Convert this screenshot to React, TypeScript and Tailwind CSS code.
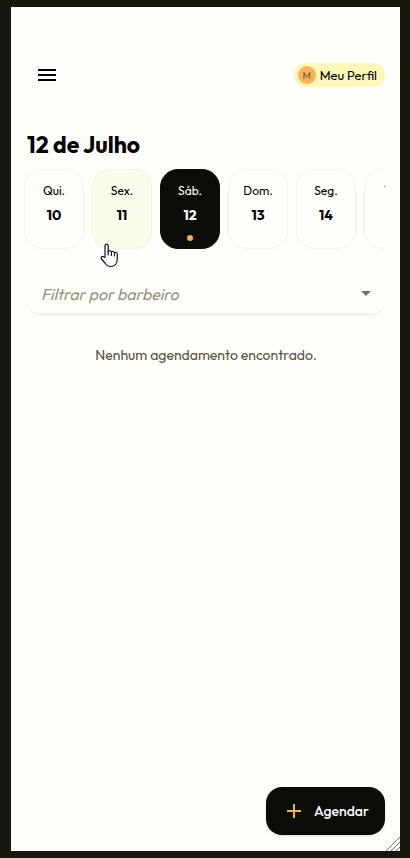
import { useState } from "react";

const days = [
  { name: "Qui.", day: 10 },
  { name: "Sex.", day: 11 },
  { name: "Sáb.", day: 12 },
  { name: "Dom.", day: 13 },
  { name: "Seg.", day: 14 },
  { name: "Ter.", day: 15 },
];

function MenuIcon() {
  return (
    <svg width="24" height="24" viewBox="0 0 24 24" fill="currentColor" aria-hidden="true">
      <path d="M3 18h18v-2H3v2zm0-5h18v-2H3v2zm0-7v2h18V6H3z" />
    </svg>
  );
}

function HandCursor() {
  return (
    <svg
      className="pointer-events-none absolute left-[76px] top-[74px]"
      width="20"
      height="25"
      viewBox="0 0 20 25"
      fill="#fdfdfd"
      stroke="#15151f"
      strokeWidth="1.2"
      strokeLinejoin="round"
      strokeLinecap="round"
      aria-hidden="true"
    >
      <path d="M5 14.5V3c0-2.4 3.2-2.4 3.2 0v5.5c.4-1.2 3-1 3.2.5.6-1 2.8-.7 3 .8.7-.8 2.8-.5 2.9 1.2V16c0 4.500-2.600 7.500-6.500 7.500-3 0-4.500-1.500-5.800-3.500L1.500 16c-1.200-2.200 1-3.300 2.300-2.200z" />
      <path d="M8.200 8.500V12M11.400 9.500V12.500M14.400 10.500V13" fill="none" />
    </svg>
  );
}

function DayCard({ name, day, selected, hovered, onSelect }: {
  name: string;
  day: number;
  selected: boolean;
  hovered: boolean;
  onSelect: () => void;
}) {
  const tone = selected
    ? "border-[#0b0b07] bg-[#0b0b07] text-white"
    : hovered
      ? "border-[#f0f0e6] bg-[#fcfcea] text-black"
      : "border-[#f0f0ee] bg-[#fdfdfa] text-black";
  return (
    <button
      type="button"
      aria-pressed={selected}
      onClick={onSelect}
      className={`flex h-20 w-[60px] shrink-0 flex-col items-center rounded-[18px] border pt-[11px] ${tone}`}
    >
      <span className="text-xs leading-5">{name}</span>
      <span className="mt-1 text-sm font-bold leading-5">{day}</span>
      {selected && <span className="mt-[10px] size-[6px] rounded-full bg-[#f8b04c]" />}
    </button>
  );
}

export default function App() {
  const [selected, setSelected] = useState(12);
  return (
    <div className="flex min-h-screen bg-[#17170f] py-[7px] pl-[11px] pr-[10px] font-['Outfit','Lato',sans-serif] text-black">
      <main className="relative flex min-w-0 flex-1 flex-col bg-[#fdfdfa] pb-4 pl-4 pr-[15px] pt-12">
        <header className="flex h-10 items-center justify-between">
          <button type="button" aria-label="Menu" className="flex size-10 items-center justify-center">
            <MenuIcon />
          </button>
          <button type="button" className="flex h-6 items-center gap-1 rounded-full bg-[#fdf7b8] pl-1 pr-2">
            <span className="flex size-[18px] items-center justify-center rounded-full bg-[#f8b255] text-[10px] text-[#6b5c3c]">
              M
            </span>
            <span className="text-[13px] leading-5">Meu Perfil</span>
          </button>
        </header>

        <h1 className="mt-9 text-[23px] font-bold leading-7">12 de Julho</h1>

        <section className="relative -ml-[3px] mt-[10px]" aria-label="Dias">
          <div className="flex gap-2 overflow-x-auto [scrollbar-width:none]">
            {days.map((d) => (
              <DayCard
                key={d.day}
                name={d.name}
                day={d.day}
                selected={selected === d.day}
                hovered={d.day === 11}
                onSelect={() => setSelected(d.day)}
              />
            ))}
          </div>
          <HandCursor />
        </section>

        <div className="mt-6 flex h-[42px] items-center rounded-[14px] border-b border-[#e6e6e1] pr-[14px]">
          <select
            aria-label="Filtrar por barbeiro"
            className="h-full min-w-0 flex-1 appearance-none bg-transparent pl-[14px] text-base italic text-[#94947e] outline-none"
          >
            <option>Filtrar por barbeiro</option>
          </select>
          <svg width="10" height="5" viewBox="0 0 10 5" fill="#73736c" aria-hidden="true">
            <path d="M0 0h10L5 5z" />
          </svg>
        </div>

        <p className="mt-[30px] text-center text-sm leading-5 text-[#55553f]">Nenhum agendamento encontrado.</p>

        <button
          type="button"
          className="mt-auto flex h-12 w-[119px] items-center self-end rounded-[16px] bg-[#0b0b07] pl-5 text-white shadow-sm"
        >
          <svg width="16" height="16" viewBox="0 0 16 16" stroke="#f8b04c" strokeWidth="2" aria-hidden="true">
            <path d="M1 8h14M8 1v14" />
          </svg>
          <span className="ml-3 text-sm font-medium leading-5">Agendar</span>
        </button>

        <svg className="absolute bottom-0 right-0" width="15" height="15" viewBox="0 0 15 15" stroke="#77776f" aria-hidden="true">
          <path d="M1 15L15 1M6 15l9-9M11 15l4-4" />
        </svg>
      </main>
    </div>
  );
}
